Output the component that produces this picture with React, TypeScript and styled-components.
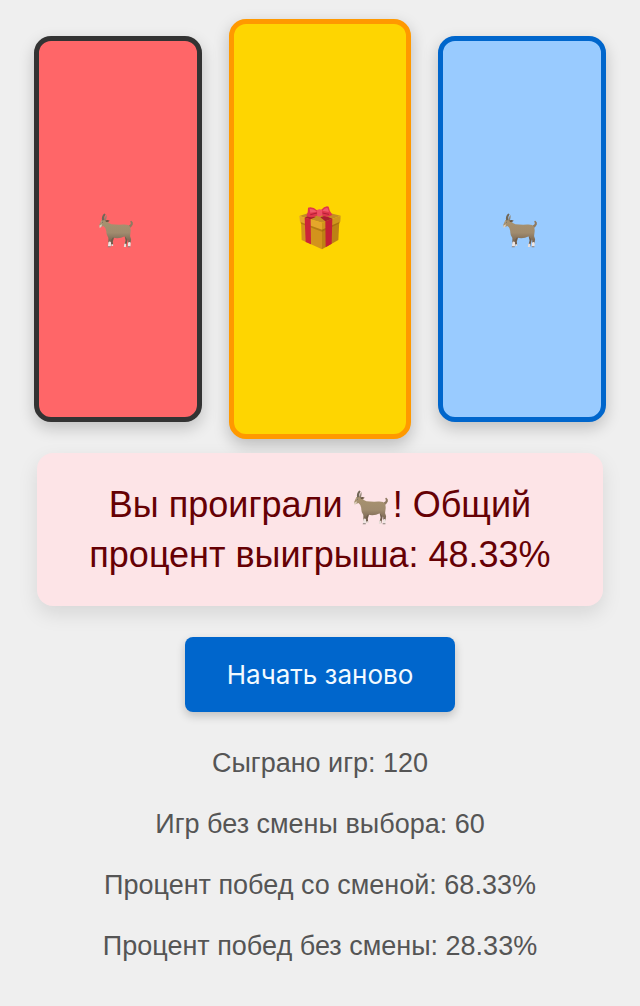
import React from "react";
import styled, { createGlobalStyle, css } from "styled-components";

const GlobalStyle = createGlobalStyle`
  *, *::before, *::after { box-sizing: border-box; }
  html { background: #efefef; }
  body {
    margin: 0;
    background: #efefef;
    font-family: "Liberation Sans", Arial, sans-serif;
  }
`;

const Page = styled.main`
  display: flex;
  flex-direction: column;
  align-items: center;
  padding: 19px 34px 32px;
`;

const Doors = styled.div`
  display: grid;
  grid-template-columns: 168fr 182fr 168fr;
  align-items: center;
  gap: 27px;
  width: 100%;
`;

type DoorTone = "opened" | "prize" | "chosen";

const tones = {
  opened: css`
    height: 386px;
    border-color: #333333;
    background: #ff6668;
  `,
  prize: css`
    height: 420px;
    border-color: #ff9900;
    background: #fed501;
    box-shadow: 0 6px 16px rgba(0, 0, 0, 0.22);
  `,
  chosen: css`
    height: 386px;
    border-color: #0066cc;
    background: #99cbff;
  `,
};

const Door = styled.button<{ $tone: DoorTone }>`
  display: flex;
  align-items: center;
  justify-content: center;
  min-width: 0;
  padding: 0;
  border: 5px solid;
  border-radius: 17px;
  box-shadow: 0 6px 16px rgba(0, 0, 0, 0.2);
  cursor: pointer;
  ${({ $tone }) => tones[$tone]}
`;

const Message = styled.p`
  position: relative;
  width: calc(100% - 6px);
  margin: 14px 0 0;
  padding: 27px 32px 26px;
  border-radius: 16px;
  background: #fde4e7;
  box-shadow: 0 8px 20px rgba(0, 0, 0, 0.1);
  color: #660004;
  font-size: 36px;
  line-height: 50px;
  text-align: center;
`;

const Restart = styled.button`
  margin: 31px 0 0;
  padding: 20px 42px;
  border: 0;
  border-radius: 8px;
  background: #0066cc;
  box-shadow: 0 4px 10px rgba(0, 0, 0, 0.2);
  color: #f2faff;
  font-family: Inter, "Liberation Sans", sans-serif;
  font-size: 26px;
  line-height: 35px;
  cursor: pointer;
`;

const Stats = styled.div`
  display: flex;
  flex-direction: column;
  gap: 26px;
  margin-top: 34px;
  color: #555555;
  font-size: 27px;
  line-height: 35px;
  text-align: center;
`;

const Stat = styled.p`
  margin: 0;
`;

const GoatSvg = styled.svg<{ $inline?: boolean }>`
  width: 40px;
  height: 40px;
  ${({ $inline }) =>
    $inline &&
    css`
      vertical-align: -9px;
    `}
`;

const GiftSvg = styled.svg`
  width: 46px;
  height: 50px;
`;

function Goat({ inline }: { inline?: boolean }) {
  const id = React.useId();
  return (
    <GoatSvg $inline={inline} viewBox="37 28 116 116" role="img" aria-label="Коза">
      <defs>
        <linearGradient id={id} x1="0" y1="0" x2="0" y2="1">
          <stop offset="0" stopColor="#a8936f" />
          <stop offset="0.55" stopColor="#a08b6e" />
          <stop offset="1" stopColor="#6f5c4b" />
        </linearGradient>
      </defs>
      <path d="M74 104 L74 124 L76 134 L81 134 L80 122 L85 106Z" fill="#6f5c4b" />
      <path d="M113 101 L117 119 L113 136 L119 136 L123 118 L124 103Z" fill="#6f5c4b" />
      <path d="M113 129 H119 L118 138 H112Z M76 130 H81 V135 H76Z" fill="#e8ded9" />
      <path
        d="M128 84 Q135 80 138 73 Q140 67 134 62 Q129 62 131 66 Q135 72 126 76Z"
        fill="#8f7a61"
      />
      <path
        d="M47 60 Q55 56 62 62 Q68 70 76 72 Q92 74 110 73 Q126 72 130 80 Q133 88 131 98 L130 106 L133 116 L131 129 L124 129 L125 119 Q118 112 115 107 Q98 116 80 111 L75 118 L74 129 L67 129 L67 112 Q60 102 61 92 Q60 82 53 77 L45 80 Q39 80 41 73Z"
        fill={`url(#${id})`}
      />
      <path d="M49 61 Q46 50 55 41 L59 43 Q53 50 56 60Z" fill="#716757" />
      <path d="M56 62 Q57 52 61 45 Q64 52 60 62Z" fill="#8f8371" />
      <path d="M58 61 Q65 58 71 62 Q66 67 60 65Z" fill="#675540" />
      <path d="M41 76 L49 72 L47 79 L42 84Z" fill="#ddd0bd" />
      <path d="M47 65 L51 63 L50 69Z" fill="#ddd1bd" />
      <circle cx="50" cy="66" r="1.5" fill="#39352e" />
      <path
        d="M67 125 Q71 120 75 125 L74 137 H66Z M124 126 Q128 121 132 126 L131 137 H124Z"
        fill="#eee5e2"
      />
      <path d="M66 136 H74 V139 H65Z M123 136 H131 V139 H123Z" fill="#8a7f7a" />
    </GoatSvg>
  );
}

function Gift() {
  return (
    <GiftSvg viewBox="0 6 138 150" role="img" aria-label="Подарок">
      <path d="M12 56 L75 78 V142 L14 114Z" fill="#d3931c" />
      <path d="M75 78 L127 56 L124 114 L75 142Z" fill="#bd8114" />
      <path d="M7 42 L62 24 L131 41 L75 62Z" fill="#c58c25" />
      <path d="M7 42 L75 62 V83 L9 60Z" fill="#e5a62b" />
      <path d="M75 62 L131 41 L130 59 L75 83Z" fill="#cf951c" />
      <path d="M10 60 L75 83 L129 59 L128 64 L75 89 L12 65Z" fill="#8a5708" opacity="0.4" />
      <path d="M23 47 L41 52 L42 127 L26 120Z" fill="#cc2438" />
      <path d="M85 58 L106 50 L104 125 L86 136Z" fill="#c51f34" />
      <path d="M23 47 L39 39 L56 45 L41 52Z M85 58 L70 46 L84 41 L106 50Z" fill="#a91d2e" />
      <path d="M62 26 Q46 12 33 17 Q34 30 28 42 Q46 50 62 40Z" fill="#e0364b" />
      <path d="M72 24 Q84 10 95 14 Q97 28 106 38 Q92 49 74 40Z" fill="#e0364b" />
      <path d="M38 20 Q50 20 60 29 L40 32Z M76 26 Q86 15 92 19 L96 30Z" fill="#ef5a6a" />
      <path d="M40 38 L60 33 M76 33 L96 37" stroke="#b21f36" strokeWidth="3" />
      <path d="M60 24 Q68 19 75 24 L76 40 Q69 46 61 42Z" fill="#ee5063" />
    </GiftSvg>
  );
}

const stats = [
  "Сыграно игр: 120",
  "Игр без смены выбора: 60",
  "Процент побед со сменой: 68.33%",
  "Процент побед без смены: 28.33%",
];

export default function App() {
  return (
    <>
      <GlobalStyle />
      <Page>
        <Doors>
          <Door type="button" $tone="opened" aria-label="Дверь 1">
            <Goat />
          </Door>
          <Door type="button" $tone="prize" aria-label="Дверь 2">
            <Gift />
          </Door>
          <Door type="button" $tone="chosen" aria-label="Дверь 3">
            <Goat />
          </Door>
        </Doors>
        <Message role="status">
          Вы проиграли <Goat inline />! Общий процент выигрыша: 48.33%
        </Message>
        <Restart type="button">Начать заново</Restart>
        <Stats>
          {stats.map((text) => (
            <Stat key={text}>{text}</Stat>
          ))}
        </Stats>
      </Page>
    </>
  );
}
